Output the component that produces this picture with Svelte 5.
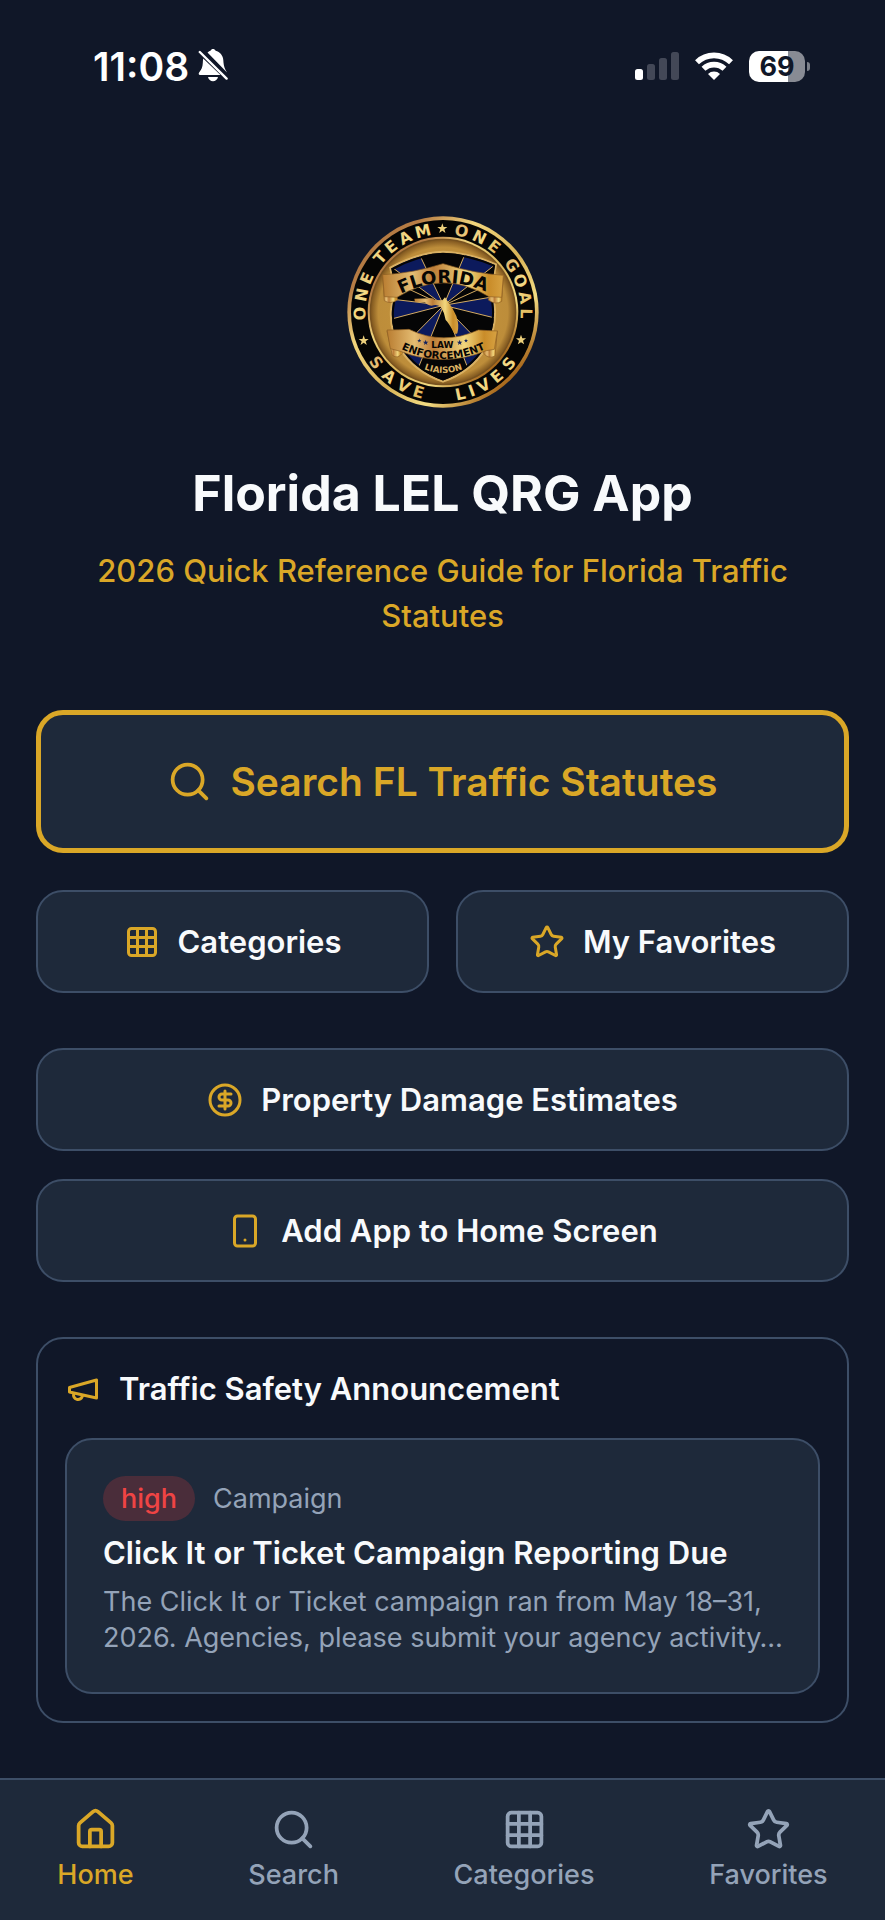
<script>
  const cx = 336;
  const cy = 338;
  const fontSize = 48;
  const advance = { O: 0.85, N: 0.837, E: 0.683, T: 0.682, A: 0.774, M: 0.995, G: 0.821, L: 0.637, S: 0.72, V: 0.774, I: 0.372 };

  // Places each letter of a word around the seal; angles are degrees from the vertical axis.
  function ringWord(word, angles, radius, bottom = false) {
    const xs = [];
    const ys = [];
    const rot = [];
    [...word].forEach((ch, i) => {
      const a = (angles[i] * Math.PI) / 180;
      const half = (advance[ch] * fontSize) / 2;
      const side = bottom ? -1 : 1;
      const px = cx + radius * Math.sin(a);
      const py = cy - side * radius * Math.cos(a);
      xs.push((px - half * Math.cos(a)).toFixed(2));
      ys.push((py - side * half * Math.sin(a)).toFixed(2));
      rot.push(side * angles[i]);
    });
    return { word, x: xs.join(' '), y: ys.join(' '), rotate: rot.join(' ') };
  }

  const ring = [
    ringWord('ONE', [-91, -78, -66], 233),
    ringWord('TEAM', [-49, -38.5, -27, -14], 233),
    ringWord('ONE', [13, 26, 38], 233),
    ringWord('GOAL', [56, 68, 80, 91], 233),
    ringWord('SAVE', [-53, -40, -28, -17], 268, true),
    ringWord('LIVES', [12, 20, 29, 40, 52], 268, true)
  ];

  const star = 'M0-16 3.8-5.2 15.2-4.9 6.1 2 9.4 12.9 0 6.4-9.4 12.9-6.1 2-15.2-4.9-3.8-5.2Z';

  const tabs = [
    { label: 'Home', icon: 'home', active: true },
    { label: 'Search', icon: 'search' },
    { label: 'Categories', icon: 'grid' },
    { label: 'Favorites', icon: 'star' }
  ];
</script>

{#snippet icon(name)}
  <svg class="icon" viewBox="0 0 24 24" aria-hidden="true">
    {#if name === 'home'}
      <path d="M15 21v-8a1 1 0 0 0-1-1h-4a1 1 0 0 0-1 1v8" />
      <path d="M3 10a2 2 0 0 1 .709-1.528l7-5.999a2 2 0 0 1 2.582 0l7 5.999A2 2 0 0 1 21 10v9a2 2 0 0 1-2 2H5a2 2 0 0 1-2-2z" />
    {:else if name === 'search'}
      <circle cx="11" cy="11" r="8" />
      <path d="m21 21-4.3-4.3" />
    {:else if name === 'grid'}
      <rect width="18" height="18" x="3" y="3" rx="2" />
      <path d="M3 9h18M3 15h18M9 3v18M15 3v18" />
    {:else if name === 'star'}
      <path d="M11.525 2.295a.53.53 0 0 1 .95 0l2.31 4.679a2.123 2.123 0 0 0 1.595 1.16l5.166.756a.53.53 0 0 1 .294.904l-3.736 3.638a2.123 2.123 0 0 0-.611 1.878l.882 5.14a.53.53 0 0 1-.771.56l-4.618-2.428a2.122 2.122 0 0 0-1.973 0L6.396 21.01a.53.53 0 0 1-.77-.56l.881-5.139a2.122 2.122 0 0 0-.611-1.879L2.16 9.795a.53.53 0 0 1 .294-.906l5.165-.755a2.122 2.122 0 0 0 1.597-1.16z" />
    {:else if name === 'dollar'}
      <circle cx="12" cy="12" r="10" />
      <path d="M16 8h-6a2 2 0 1 0 0 4h4a2 2 0 1 1 0 4H8" />
      <path d="M12 18V6" />
    {:else if name === 'phone'}
      <rect width="14" height="20" x="5" y="2" rx="2" />
      <path d="M12 18h.01" />
    {:else if name === 'megaphone'}
      <path d="m3 11 18-5v12L3 14v-3z" />
      <path d="M11.6 16.8a3 3 0 1 1-5.8-1.6" />
    {/if}
  </svg>
{/snippet}

<div class="screen">
  <div class="status">
    <div class="clock">
      <span>11:08</span>
      <svg width="30" height="34" viewBox="0 0 30 34" role="img" aria-label="Silent mode">
        <path fill="#fff" d="M9.500 3.500C10.500 2.500 11.700 1.900 12.500 1.700 13 .7 13.900 0 15 0s2.100.7 2.600 1.700C22 2.800 25 6.400 25.300 11c.2 3.600.6 6.800 2 9.400L29 23.400zM5.200 9.600 22.500 26H2C.8 26 .3 24.600 1.100 23.500 3.500 20.500 4.600 18 4.800 14c.1-1.600.1-3 .4-4.400ZM10 28h10c-.5 2.600-2.600 4.300-5 4.300S10.500 30.600 10 28Z" />
        <path stroke="#fff" stroke-width="2.4" stroke-linecap="round" d="M1.800 3 28.600 29.600" />
      </svg>
    </div>
    <div class="signals">
      <svg width="44" height="30" viewBox="0 0 44 30" role="img" aria-label="Signal">
        <rect x="0" y="18" width="8" height="11" rx="2.500" fill="#fff" />
        <g fill="#434857">
          <rect x="12" y="13" width="8" height="16" rx="2.500" />
          <rect x="24" y="7" width="8" height="22" rx="2.500" />
          <rect x="36" y="1" width="8" height="28" rx="2.500" />
        </g>
      </svg>
      <svg width="38" height="28" viewBox="0 0 38 28" role="img" aria-label="Wi-Fi">
        <g fill="none" stroke="#fff" stroke-width="5.600">
          <path d="M2 10.200a24.500 24.500 0 0 1 34 0" />
          <path d="M8.500 16.800a15.200 15.200 0 0 1 21 0" />
        </g>
        <path fill="#fff" d="M19 28l-6-6.100a8.500 8.500 0 0 1 12 0z" />
      </svg>
      <div class="battery"><span>69</span></div>
    </div>
  </div>

  <main>
    <header class="hero">
      <svg class="seal" viewBox="48 50 576 576" role="img" aria-label="Florida Law Enforcement Liaison seal">
        <defs>
          <linearGradient id="rim" x1="0" y1="0" x2="1" y2="1">
            <stop offset="0" stop-color="#a8703a" />
            <stop offset=".2" stop-color="#b77d45" />
            <stop offset=".35" stop-color="#f1d57d" />
            <stop offset=".55" stop-color="#d9b458" />
            <stop offset=".7" stop-color="#f3dc83" />
            <stop offset=".85" stop-color="#a8681c" />
            <stop offset="1" stop-color="#e5c163" />
          </linearGradient>
          <linearGradient id="ribbon" x1="0" y1="0" x2="1" y2="0">
            <stop offset="0" stop-color="#b97d31" />
            <stop offset=".25" stop-color="#e5bd73" />
            <stop offset=".42" stop-color="#bd7d38" />
            <stop offset=".7" stop-color="#f2d77e" />
            <stop offset=".88" stop-color="#c98c29" />
            <stop offset="1" stop-color="#d7a242" />
          </linearGradient>
          <linearGradient id="letters" x1="0" y1="0" x2="1" y2="1">
            <stop offset="0" stop-color="#d9a866" />
            <stop offset=".5" stop-color="#f4dc86" />
            <stop offset="1" stop-color="#dcae4d" />
          </linearGradient>
          <radialGradient id="disc">
            <stop offset="0" stop-color="#c8973d" />
            <stop offset=".9" stop-color="#bd8d3a" />
            <stop offset="1" stop-color="#80571f" />
          </radialGradient>
          <clipPath id="shield-clip">
            <path d="M178 205Q260 160 336 157 415 160 495 195C484 245 486 290 492 330 495 400 465 500 336 547 205 500 175 400 180 330 188 290 188 245 178 205Z" />
          </clipPath>
          <path id="arc-florida" d="M190 294Q336 212 484 286" />
          <path id="arc-enforcement" d="M198 442Q336 516 476 442" />
          <path id="arc-liaison" d="M262 502Q336 540 412 502" />
        </defs>
        <circle cx="336" cy="338" r="287" fill="url(#rim)" />
        <circle cx="336" cy="338" r="276" fill="#050504" />
        <circle cx="336" cy="338" r="226" fill="url(#rim)" />
        <circle cx="336" cy="338" r="220" fill="#76511f" />
        <circle cx="336" cy="338" r="216" fill="url(#disc)" />

        <g clip-path="url(#shield-clip)">
          <path fill="#050506" d="M150 140h370v420H150z" />
          <path fill="#0c1a5c" stroke="#d5ac62" stroke-width="3" d="M338 318 175 198 258 150ZM338 318 408 150 500 190ZM338 318 170 298V362ZM338 318 500 290V358ZM338 318 190 468 262 505ZM338 318 410 505 484 468Z" />
          <path fill="none" stroke="#d5ac62" stroke-width="3" d="M338 318 170 240M338 318 510 240" />
        </g>
        <path fill="none" stroke="#d9b062" stroke-width="6" d="M178 205Q260 160 336 157 415 160 495 195C484 245 486 290 492 330 495 400 465 500 336 547 205 500 175 400 180 330 188 290 188 245 178 205Z" />
        <path fill="none" stroke="#050506" stroke-width="6" d="M184 209Q260 167 336 163 415 166 489 199C479 245 480 290 486 330 489 396 460 495 336 540 211 495 181 396 186 330 194 290 194 245 184 209Z" />

        <path fill="url(#ribbon)" d="M250 298 304 297 312 302 334 303 342 294 350 306Q366 326 376 350 386 378 379 402 371 408 364 391 352 370 344 362 341 340 329 322 318 314 302 319 288 318 282 309L252 308Z" />

        <g fill="url(#ribbon)" stroke="#8d5e22" stroke-width="2">
          <path d="M155 226 160 304Q178 316 200 302L192 262Z" />
          <path d="M517 228 512 306Q494 318 472 302L480 262Z" />
          <path d="M155 226Q245 222 336 193 428 222 517 228L512 294 474 292Q336 208 198 294L160 292Z" />
          <path d="M168 395 184 468Q200 480 214 462L214 420Z" />
          <path d="M499 395 492 470Q472 480 458 462L458 420Z" />
          <path d="M168 392Q206 392 234 390 336 440 442 392 470 394 499 395L490 450 466 454Q336 506 208 456L178 448Z" />
        </g>

        <g class="seal-text">
          <g font-size={fontSize} fill="url(#letters)">
            {#each ring as w}
              <text x={w.x} y={w.y} rotate={w.rotate}>{w.word}</text>
            {/each}
          </g>
          <text font-size="54" fill="#080604" text-anchor="middle"><textPath href="#arc-florida" startOffset="50%">FLORIDA</textPath></text>
          <text x="334" y="446" font-size="27" fill="#080604" text-anchor="middle">LAW</text>
          <text font-size="31" fill="#080604" text-anchor="middle"><textPath href="#arc-enforcement" startOffset="50%">ENFORCEMENT</textPath></text>
          <text font-size="26" fill="#d9b062" text-anchor="middle"><textPath href="#arc-liaison" startOffset="50%">LIAISON</textPath></text>
        </g>
        <g fill="#ecd07c">
          <path d={star} transform="translate(334 88)" />
          <path d={star} transform="translate(98 424)" />
          <path d={star} transform="translate(570 422)" />
        </g>
        <g fill="#12235f">
          <path d={star} transform="translate(284 430) scale(.55)" />
          <path d={star} transform="translate(265 424) scale(.4)" />
          <path d={star} transform="translate(386 430) scale(.55)" />
          <path d={star} transform="translate(405 424) scale(.4)" />
        </g>
      </svg>
      <h1>Florida LEL QRG App</h1>
      <p>2026 Quick Reference Guide for Florida Traffic Statutes</p>
    </header>

    <button class="btn primary" type="button">{@render icon('search')}Search FL Traffic Statutes</button>

    <div class="pair">
      <button class="btn" type="button">{@render icon('grid')}Categories</button>
      <button class="btn" type="button">{@render icon('star')}My Favorites</button>
    </div>

    <div class="stack">
      <button class="btn" type="button">{@render icon('dollar')}Property Damage Estimates</button>
      <button class="btn" type="button">{@render icon('phone')}Add App to Home Screen</button>
    </div>

    <section class="news">
      <h2>{@render icon('megaphone')}Traffic Safety Announcement</h2>
      <article>
        <div class="meta"><span class="pill">high</span><span>Campaign</span></div>
        <h3>Click It or Ticket Campaign Reporting Due</h3>
        <p>The Click It or Ticket campaign ran from May 18–31, 2026. Agencies, please submit your agency activity…</p>
      </article>
    </section>
  </main>

  <nav aria-label="Main">
    {#each tabs as tab}
      <a href={'#' + tab.label.toLowerCase()} class:active={tab.active} aria-current={tab.active ? 'page' : undefined}>
        {@render icon(tab.icon)}
        <span>{tab.label}</span>
      </a>
    {/each}
  </nav>
</div>

<style>
  :global(body) {
    background: #101728;
  }

  .screen {
    display: flex;
    flex-direction: column;
    min-height: 100vh;
    font-family: Inter, 'Liberation Sans', sans-serif;
    color: #f8fafc;
    background: #101728;
  }

  h1, h2, h3, p {
    margin: 0;
  }

  .icon {
    flex: none;
    width: 36px;
    height: 36px;
    fill: none;
    stroke: currentColor;
    stroke-width: 2;
    stroke-linecap: round;
    stroke-linejoin: round;
  }

  .status {
    display: flex;
    align-items: center;
    justify-content: space-between;
    height: 132px;
    padding: 0 75px 0 93px;
    color: #fff;
  }

  .clock, .signals {
    display: flex;
    align-items: center;
  }

  .clock {
    gap: 9px;
    font-size: 39px;
    font-weight: 600;
  }

  .signals {
    gap: 16px;
  }

  .battery {
    position: relative;
    width: 56px;
    margin-right: 5px;
    border-radius: 10px;
    background: linear-gradient(90deg, #fff 70%, #888b94 70%);
    color: #101728;
    font-size: 27px;
    font-weight: 700;
    line-height: 31px;
    text-align: center;
  }

  .battery::after {
    content: '';
    position: absolute;
    top: 11px;
    right: -5px;
    width: 3px;
    height: 9px;
    border-radius: 0 4px 4px 0;
    background: #7b7f89;
  }

  main {
    flex: 1;
    padding: 84px 36px 54px;
  }

  .hero {
    display: flex;
    flex-direction: column;
    align-items: center;
    text-align: center;
    margin-bottom: 72px;
  }

  .seal {
    width: 192px;
    height: 192px;
  }

  .seal-text {
    font-family: 'DejaVu Sans', sans-serif;
    font-weight: 700;
  }

  h1 {
    margin-top: 55px;
    font-size: 50px;
    font-weight: 700;
    line-height: 60px;
  }

  .hero p {
    margin-top: 25px;
    padding: 0 36px;
    color: #daa727;
    font-size: 31px;
    font-weight: 500;
    line-height: 45px;
  }

  .btn {
    display: flex;
    align-items: center;
    justify-content: center;
    gap: 18px;
    width: 100%;
    padding: 27px;
    border: 2px solid #3d4e67;
    border-radius: 27px;
    background: #1e293a;
    color: #f8fafc;
    font-family: inherit;
    font-size: 31px;
    font-weight: 600;
    line-height: 45px;
  }

  .btn .icon, h2 .icon {
    color: #daa727;
  }

  .primary {
    padding: 44px;
    border: 5px solid #daa727;
    color: #daa727;
    font-size: 39px;
  }

  .primary .icon {
    width: 45px;
    height: 45px;
  }

  .pair {
    display: grid;
    grid-template-columns: 1fr 1fr;
    gap: 27px;
    margin-top: 37px;
  }

  .stack {
    display: grid;
    gap: 28px;
    margin-top: 55px;
  }

  .news {
    margin-top: 55px;
    padding: 27px;
    border: 2px solid #3d4e67;
    border-radius: 27px;
  }

  h2 {
    display: flex;
    align-items: center;
    gap: 18px;
    margin-bottom: 27px;
    font-size: 31px;
    font-weight: 600;
    line-height: 45px;
  }

  article {
    padding: 36px 27px 36px 36px;
    border: 2px solid #3d4e67;
    border-radius: 27px;
    background: #1e293a;
  }

  .meta {
    display: flex;
    align-items: center;
    gap: 18px;
    color: #94a3b8;
    font-size: 27px;
    line-height: 45px;
  }

  .pill {
    padding: 0 18px;
    border-radius: 23px;
    background: #4a2d3a;
    color: #ef4444;
    font-weight: 500;
  }

  h3 {
    margin: 9px 0;
    font-size: 31px;
    font-weight: 600;
    line-height: 45px;
  }

  article p {
    color: #94a3b8;
    font-size: 27px;
    line-height: 36px;
  }

  nav {
    display: flex;
    justify-content: space-around;
    padding: 27px 0;
    border-top: 2px solid #3d4e67;
    background: #1e293a;
  }

  nav a {
    display: flex;
    flex-direction: column;
    align-items: center;
    gap: 5px;
    color: #94a3b8;
    font-size: 27px;
    font-weight: 500;
    line-height: 36px;
    text-decoration: none;
  }

  nav a.active {
    color: #daa727;
  }

  nav .icon {
    width: 45px;
    height: 45px;
  }
</style>
